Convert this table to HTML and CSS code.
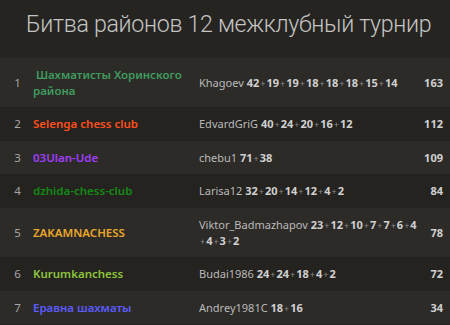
FILE: index.html
```html
<!DOCTYPE html>
<html lang="ru">
<head>
<meta charset="utf-8">
<link rel="stylesheet" href="styles.css">
</head>
<body>
<div class="box">
  <h1 class="title">Битва районов 12 межклубный турнир</h1>
  <table class="standing">
    <tbody>
      <tr>
        <td class="rank">1</td>
        <td class="team c1">&nbsp;Шахматисты Хоринского района</td>
        <td class="players">Khagoev <b>42</b><i>+</i><b>19</b><i>+</i><b>19</b><i>+</i><b>18</b><i>+</i><b>18</b><i>+</i><b>18</b><i>+</i><b>15</b><i>+</i><b>14</b></td>
        <td class="total">163</td>
      </tr>
      <tr>
        <td class="rank">2</td>
        <td class="team c2">Selenga chess club</td>
        <td class="players">EdvardGriG <b>40</b><i>+</i><b>24</b><i>+</i><b>20</b><i>+</i><b>16</b><i>+</i><b>12</b></td>
        <td class="total">112</td>
      </tr>
      <tr>
        <td class="rank">3</td>
        <td class="team c3">03Ulan-Ude</td>
        <td class="players">chebu1 <b>71</b><i>+</i><b>38</b></td>
        <td class="total">109</td>
      </tr>
      <tr>
        <td class="rank">4</td>
        <td class="team c4">dzhida-chess-club</td>
        <td class="players">Larisa12 <b>32</b><i>+</i><b>20</b><i>+</i><b>14</b><i>+</i><b>12</b><i>+</i><b>4</b><i>+</i><b>2</b></td>
        <td class="total">84</td>
      </tr>
      <tr>
        <td class="rank">5</td>
        <td class="team c5">ZAKAMNACHESS</td>
        <td class="players">Viktor_Badmazhapov <b>23</b><i>+</i><b>12</b><i>+</i><b>10</b><i>+</i><b>7</b><i>+</i><b>7</b><i>+</i><b>6</b><i>+</i><b>4</b><wbr><i>+</i><b>4</b><i>+</i><b>3</b><i>+</i><b>2</b></td>
        <td class="total">78</td>
      </tr>
      <tr>
        <td class="rank">6</td>
        <td class="team c6">Kurumkanchess</td>
        <td class="players">Budai1986 <b>24</b><i>+</i><b>24</b><i>+</i><b>18</b><i>+</i><b>4</b><i>+</i><b>2</b></td>
        <td class="total">72</td>
      </tr>
      <tr>
        <td class="rank">7</td>
        <td class="team c7">Еравна шахматы</td>
        <td class="players">Andrey1981C <b>18</b><i>+</i><b>16</b></td>
        <td class="total">34</td>
      </tr>
    </tbody>
  </table>
</div>
</body>
</html>
```
FILE: styles.css
```css
html, body {
  margin: 0;
  padding: 0;
  background: #262421;
}
.box {
  width: 450px;
  height: 325px;
  overflow: hidden;
  font-family: "Noto Sans", sans-serif;
  font-size: 11px;
  color: #bababa;
}
.title {
  margin: 0;
  height: 58px;
  box-sizing: border-box;
  padding: 9px 0 0 26px;
  font-family: Roboto, sans-serif;
  font-weight: 300;
  font-size: 23.2px;
  letter-spacing: -0.3px;
  line-height: 30px;
  color: #c4c4c4;
  white-space: nowrap;
}
.standing {
  width: 100%;
  border-collapse: collapse;
  table-layout: fixed;
}
.standing tr:nth-child(odd) {
  background: #2d2b28;
}
.standing tr:nth-child(even) {
  background: #252320;
}
.standing td {
  padding: 9px 0;
  line-height: 15.6px;
  vertical-align: middle;
}
.rank {
  width: 31px;
  text-align: center;
  color: #a5a5a5;
  font-size: 11.5px;
  padding-left: 2px !important;
}
.team {
  width: 153px;
  font-weight: 600;
  font-size: 11.5px;
  padding-right: 6px !important;
}
.players {
  width: 222px;
  padding-left: 7px !important;
}
.players b {
  font-weight: 700;
  color: #d0d0d0;
}
.players i {
  font-style: normal;
  font-size: 9px;
  line-height: 9px;
  color: #8a8a8a;
  padding: 0 1px;
}
.total {
  text-align: right;
  font-weight: 700;
  color: #d0d0d0;
  padding-right: 7px !important;
}
.c1 { color: #3f9c5e; }
.c2 { color: #ff4f1c; }
.c3 { color: #a13dff; }
.c4 { color: #148a14; }
.c5 { color: #e9a62a; }
.c6 { color: #8ec63c; }
.c7 { color: #5b5bff; }
```
